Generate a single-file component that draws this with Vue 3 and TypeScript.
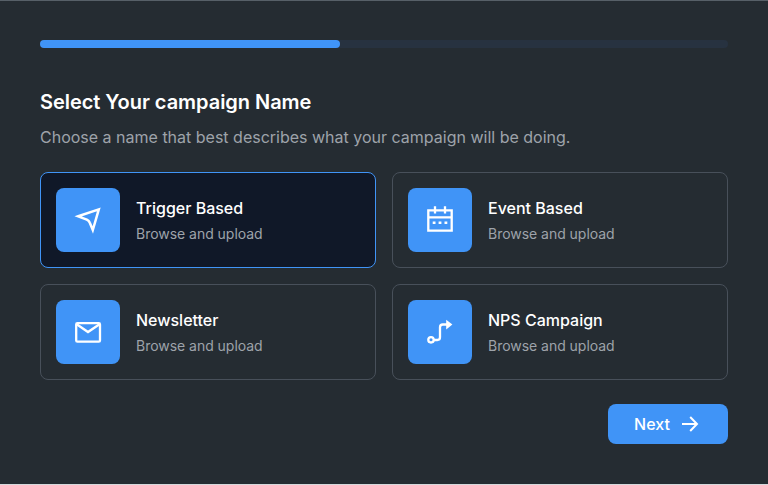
<script setup lang="ts">
import { ref } from 'vue'

type IconName = 'send' | 'calendar' | 'mail' | 'route'

interface Campaign {
  title: string
  hint: string
  icon: IconName
}

const progress = 43.6
const selected = ref(0)
const campaigns: Campaign[] = [
  { title: 'Trigger Based', hint: 'Browse and upload', icon: 'send' },
  { title: 'Event Based', hint: 'Browse and upload', icon: 'calendar' },
  { title: 'Newsletter', hint: 'Browse and upload', icon: 'mail' },
  { title: 'NPS Campaign', hint: 'Browse and upload', icon: 'route' },
]
</script>

<template>
  <main class="wizard">
    <div class="track">
      <div class="bar" :style="{ width: progress + '%' }"></div>
    </div>
    <h1 class="heading">Select Your campaign Name</h1>
    <p class="lead">Choose a name that best describes what your campaign will be doing.</p>

    <div class="grid">
      <div
        v-for="(c, i) in campaigns"
        :key="c.title"
        class="card"
        :class="{ active: i === selected }"
        @click="selected = i"
      >
        <div class="tile">
          <svg class="icon" viewBox="0 0 32 32" fill="none" stroke="#fff" stroke-width="2.3">
            <path v-if="c.icon === 'send'" d="M6.2 12.3 26.8 5.4 20.8 26 17.8 18.7Q17 16.6 14.8 15.6Z" stroke-width="2.5" />
            <template v-else-if="c.icon === 'calendar'">
              <path d="M4.3 6.3h23.4v20.4H4.3zM4.3 13.3h23.4M11 2.2v7.3M21 2.2v7.3" />
              <path d="M8.7 18.8h2.8M14.6 18.8h2.8M20.5 18.8h2.8" stroke-width="2.4" />
            </template>
            <template v-else-if="c.icon === 'mail'">
              <rect x="4.2" y="7.2" width="23.8" height="18.4" rx="1.2" />
              <path d="M4.7 8.2 16 16 27.5 8.2" />
            </template>
            <template v-else>
              <circle cx="7" cy="23.8" r="2.7" />
              <path d="M9.7 24H13.3Q16 24 16 21.3V11.2Q16 8.5 18.7 8.5H23" />
              <path d="M22.2 3.7 28.4 8.5 22.2 13.4Z" fill="#fff" stroke="none" />
            </template>
          </svg>
        </div>
        <div class="copy">
          <span class="title">{{ c.title }}</span>
          <span class="hint">{{ c.hint }}</span>
        </div>
      </div>
    </div>

    <div class="footer">
      <button class="next" type="button">
        <span>Next</span>
        <svg class="arrow" viewBox="0 0 24 24" fill="none" stroke="#fff" stroke-width="2">
          <path d="M4 12h15M12.2 5 19 12 12.2 19" />
        </svg>
      </button>
    </div>
  </main>
</template>

<style>
body {
  margin: 0;
  background: #252c32;
}
</style>

<style scoped>
.wizard {
  box-sizing: border-box;
  height: 485px;
  padding: 39px 40px 0;
  border-top: 1px solid #576068;
  border-bottom: 1px solid #d5d9dc;
  background: #252c32;
  font-family: Inter, sans-serif;
  color: #fff;
}
.track {
  height: 8px;
  border-radius: 4px;
  background: #273240;
}
.bar {
  height: 8px;
  border-radius: 4px;
  background: #4094f7;
}
.heading {
  margin: 38px 0 0;
  font-size: 20px;
  line-height: 32px;
  font-weight: 600;
  letter-spacing: -0.04px;
}
.lead {
  margin: 7px 0 0;
  font-size: 16px;
  line-height: 24px;
  color: #9ea3aa;
}
.grid {
  display: grid;
  grid-template-columns: 1fr 1fr;
  gap: 16px;
  margin-top: 23px;
}
.card {
  display: flex;
  align-items: center;
  gap: 16px;
  box-sizing: border-box;
  height: 96px;
  padding: 0 15px;
  border: 1px solid #48505a;
  border-radius: 8px;
  cursor: pointer;
}
.card.active {
  border-color: #4094f7;
  background: #101828;
}
.tile {
  display: flex;
  align-items: center;
  justify-content: center;
  width: 64px;
  height: 64px;
  border-radius: 8px;
  background: #4094f7;
}
.icon {
  width: 32px;
  height: 32px;
}
.copy {
  display: flex;
  flex-direction: column;
  gap: 2px;
  padding-top: 2px;
}
.title {
  font-size: 16px;
  line-height: 24px;
  font-weight: 500;
}
.hint {
  font-size: 14px;
  line-height: 24px;
  letter-spacing: -0.03px;
  color: #9ea3aa;
}
.footer {
  display: flex;
  justify-content: flex-end;
  margin-top: 24px;
}
.next {
  display: flex;
  align-items: center;
  justify-content: center;
  gap: 8px;
  width: 120px;
  height: 40px;
  padding: 0;
  border: 0;
  border-radius: 8px;
  background: #4094f7;
  color: #fff;
  font: 500 16px/24px Inter, sans-serif;
}
.arrow {
  width: 24px;
  height: 24px;
}
</style>
